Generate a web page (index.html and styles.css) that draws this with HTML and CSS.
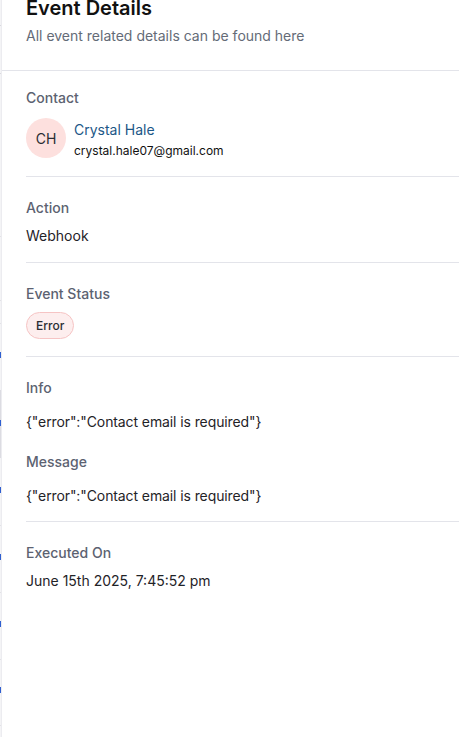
FILE: index.html
```html
<!DOCTYPE html>
<html lang="en">
<head>
<meta charset="utf-8">
<title>Event Details</title>
<link rel="stylesheet" href="styles.css">
</head>
<body>
<div class="page">
  <div class="backdrop"></div>
  <aside class="panel">
    <header class="panel-header">
      <h1 class="title">Event Details</h1>
      <p class="subtitle">All event related details can be found here</p>
    </header>

    <section class="section section-contact">
      <div class="label">Contact</div>
      <div class="contact">
        <div class="avatar">CH</div>
        <div class="contact-text">
          <div class="contact-name">Crystal Hale</div>
          <div class="contact-email">crystal.hale07@gmail.com</div>
        </div>
      </div>
    </section>

    <section class="section section-action">
      <div class="label">Action</div>
      <div class="value value-tight">Webhook</div>
    </section>

    <section class="section section-status">
      <div class="label">Event Status</div>
      <span class="badge">Error</span>
    </section>

    <section class="section section-info">
      <div class="label">Info</div>
      <div class="value value-loose">{"error":"Contact email is required"}</div>
      <div class="label label-second">Message</div>
      <div class="value value-loose">{"error":"Contact email is required"}</div>
    </section>

    <section class="section section-executed">
      <div class="label">Executed On</div>
      <div class="value value-date">June 15th 2025, 7:45:52 pm</div>
    </section>
  </aside>
</div>
</body>
</html>
```

FILE: styles.css
```css
html, body {
  margin: 0;
  padding: 0;
  background: #ffffff;
}

body {
  width: 459px;
  height: 737px;
  overflow: hidden;
  font-family: Inter, "Noto Sans", "Liberation Sans", sans-serif;
  color: #1f2328;
}

.page {
  display: flex;
  height: 737px;
}

.backdrop {
  flex: 0 0 2px;
  background-color: #f4f4f6;
  background-image:
    linear-gradient(to bottom,
      transparent 0 25px, #d9d9de 25px 26px, transparent 26px 73px,
      #d9d9de 73px 74px, transparent 74px 236px, #e2e2e6 236px 237px,
      transparent 237px 300px, #e2e2e6 300px 301px, transparent 301px 323px,
      #e2e2e6 323px 324px, transparent 324px 352px, #2f5fd0 352px 358px,
      transparent 358px 390px, #dcdce2 390px 420px, #2f5fd0 420px 426px,
      #dcdce2 426px 458px, transparent 458px 487px, #2f5fd0 487px 493px,
      transparent 493px 525px, #e2e2e6 525px 526px, transparent 526px 554px,
      #2f5fd0 554px 560px, transparent 560px 592px, #e2e2e6 592px 593px,
      transparent 593px 621px, #2f5fd0 621px 627px, transparent 627px 659px,
      #e2e2e6 659px 660px, transparent 660px 687px, #2f5fd0 687px 693px,
      transparent 693px 725px, #e2e2e6 725px 726px, transparent 726px);
}

.panel {
  flex: 1 1 auto;
  background: #ffffff;
  box-shadow: -1px 0 0 #ececf0;
}

.panel-header {
  padding: 0 24px 24px 24px;
  border-bottom: 1px solid #e3e4ea;
}

.title {
  margin: -6px 0 0 0;
  font-size: 20px;
  line-height: 28px;
  font-weight: 600;
  color: #111111;
}

.subtitle {
  margin: 4px 0 0 0;
  font-size: 14px;
  line-height: 20px;
  color: #646b77;
}

.section {
  margin: 0 0 0 24px;
  border-bottom: 1px solid #e3e4ea;
  display: flex;
  flex-direction: column;
  align-items: flex-start;
}

.section-contact { padding: 17px 0 17px 0; }
.section-action { padding: 21px 0 16px 0; }
.section-status { padding: 21px 0 17px 0; }
.section-info { padding: 21px 0 15px 0; }
.section-executed { padding: 21px 0 0 0; border-bottom: none; }

.label {
  font-size: 14px;
  line-height: 20px;
  font-weight: 500;
  color: #5c6271;
}

.label-second {
  margin-top: 20px;
}

.value {
  font-size: 14px;
  line-height: 20px;
  color: #1f2328;
}

.value-tight { margin-top: 8px; }
.value-loose { margin-top: 14px; letter-spacing: -0.1px; }
.value-date { margin-top: 8px; }

.contact {
  margin-top: 10px;
  display: flex;
  align-items: flex-start;
  gap: 8px;
}

.avatar {
  width: 40px;
  height: 40px;
  border-radius: 50%;
  background: #fde0de;
  color: #2a2d33;
  font-size: 14px;
  display: flex;
  align-items: center;
  justify-content: center;
}

.contact-text {
  display: flex;
  flex-direction: column;
  gap: 3px;
  padding-top: 2px;
}

.contact-name {
  font-size: 14px;
  line-height: 20px;
  color: #1c5787;
}

.contact-email {
  font-size: 12px;
  line-height: 16px;
  color: #111111;
}

.badge {
  margin-top: 8px;
  box-sizing: border-box;
  height: 27px;
  padding: 0 9px;
  display: inline-flex;
  align-items: center;
  border: 1px solid #f6c4c4;
  background: #fdeeee;
  border-radius: 14px;
  font-size: 12px;
  font-weight: 500;
  color: #2a2d33;
}
```
